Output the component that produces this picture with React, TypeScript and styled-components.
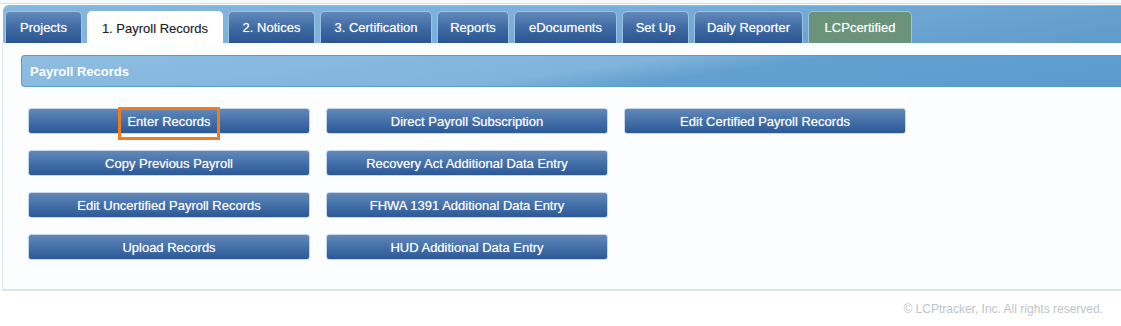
import styled, { createGlobalStyle } from "styled-components";

const GlobalStyle = createGlobalStyle`
  body {
    margin: 0;
    background: #ffffff;
    font-family: "Liberation Sans", Arial, sans-serif;
  }
`;

const tabs = [
  { label: "Projects", w: 77 },
  { label: "1. Payroll Records", w: 136, active: true },
  { label: "2. Notices", w: 87 },
  { label: "3. Certification", w: 112 },
  { label: "Reports", w: 72 },
  { label: "eDocuments", w: 103 },
  { label: "Set Up", w: 67 },
  { label: "Daily Reporter", w: 109 },
  { label: "LCPcertified", w: 104, green: true },
];

const buttons = [
  { label: "Enter Records", highlight: true },
  { label: "Copy Previous Payroll" },
  { label: "Edit Uncertified Payroll Records" },
  { label: "Upload Records" },
  { label: "Direct Payroll Subscription" },
  { label: "Recovery Act Additional Data Entry" },
  { label: "FHWA 1391 Additional Data Entry" },
  { label: "HUD Additional Data Entry" },
  { label: "Edit Certified Payroll Records" },
];

const App = () => {
  return (
    <Page>
      <GlobalStyle />
      <TopStrip />
      <TabBar>
        {tabs.map((t) => (
          <Tab key={t.label} $w={t.w} $active={t.active} $green={t.green}>
            {t.label}
          </Tab>
        ))}
      </TabBar>
      <Content>
        <SectionHeader>Payroll Records</SectionHeader>
        <ButtonGrid>
          {buttons.map((b) => (
            <ActionButton key={b.label}>
              {b.highlight ? <Highlight>{b.label}</Highlight> : b.label}
            </ActionButton>
          ))}
        </ButtonGrid>
      </Content>
      <Footer>© LCPtracker, Inc. All rights reserved.</Footer>
    </Page>
  );
};
export default App;

const Page = styled.div`
  width: 1121px;
  height: 326px;
  display: flex;
  flex-direction: column;
  overflow: hidden;
`;

const TopStrip = styled.div`
  height: 3px;
  border-bottom: 1px solid #d3e1ec;
  background: #f7fafc;
`;

const TabBar = styled.div`
  margin: 1px 0 0 3px;
  height: 38px;
  box-sizing: border-box;
  display: flex;
  align-items: flex-end;
  gap: 5px;
  padding: 0 0 0 1px;
  border: 1px solid #8bbbe0;
  border-right: none;
  border-bottom: none;
  border-radius: 6px 0 0 0;
  background: linear-gradient(170deg, #86b8de 0%, #7ab0da 45%, #5f9bcb 100%);
`;

const Tab = styled.div<{ $w: number; $active?: boolean; $green?: boolean }>`
  width: ${(p) => p.$w}px;
  flex: 0 0 auto;
  height: 32px;
  box-sizing: border-box;
  display: flex;
  align-items: center;
  justify-content: center;
  white-space: nowrap;
  font-size: 13px;
  color: ${(p) => (p.$active ? "#222" : "#fff")};
  text-shadow: ${(p) => (p.$active ? "0 0 1px rgba(0,0,0,0.25)" : "0 0 1px rgba(255,255,255,0.55)")};
  border: 1px solid ${(p) => (p.$active ? "#ffffff" : "#9dc3e2")};
  border-bottom: none;
  border-radius: 5px 5px 0 0;
  background: ${(p) =>
    p.$active
      ? "#ffffff"
      : p.$green
      ? "#6a937a"
      : "linear-gradient(to bottom, #6289b9 0%, #3d68a3 55%, #2a5593 100%)"};
  ${(p) => p.$active && "height: 33px; margin-bottom: -1px;"}
`;

const Content = styled.div`
  flex: 0 0 auto;
  margin-left: 2px;
  padding: 12px 0 29px 18px;
  border-left: 1px solid #dce8f2;
  border-bottom: 2px solid #d6e5f2;
  background: #fbfdfe;
`;

const SectionHeader = styled.div`
  height: 32px;
  box-sizing: border-box;
  display: flex;
  align-items: center;
  padding-left: 8px;
  font-size: 13px;
  font-weight: bold;
  color: #fff;
  border: 1px solid #5a9dd0;
  border-right: none;
  border-radius: 4px 0 0 4px;
  background: linear-gradient(172deg, #8fbde1 0%, #80b4dc 50%, #62a0cf 62%, #5b9ccd 100%);
`;

const ButtonGrid = styled.div`
  margin: 21px 0 0 7px;
  display: grid;
  grid-auto-flow: column;
  grid-template-rows: repeat(4, 26px);
  grid-template-columns: repeat(3, 282px);
  column-gap: 16px;
  row-gap: 16px;
`;

const ActionButton = styled.div`
  display: flex;
  align-items: center;
  justify-content: center;
  font-size: 13px;
  color: #fff;
  text-shadow: 0 0 1px rgba(255, 255, 255, 0.55);
  border-radius: 3px;
  border: 1px solid #c7d7e8;
  box-sizing: border-box;
  background: linear-gradient(to bottom, #6388b8 0%, #4470a9 50%, #2c5896 100%);
`;

const Highlight = styled.span`
  position: relative;

  &::after {
    content: "";
    position: absolute;
    left: -9px;
    right: -9px;
    top: -7px;
    bottom: -11px;
    border: 3px solid #f47a1f;
  }
`;

const Footer = styled.div`
  flex: 1;
  display: flex;
  align-items: center;
  justify-content: flex-end;
  padding-right: 18px;
  font-size: 12px;
  color: #c0c4c8;
`;
